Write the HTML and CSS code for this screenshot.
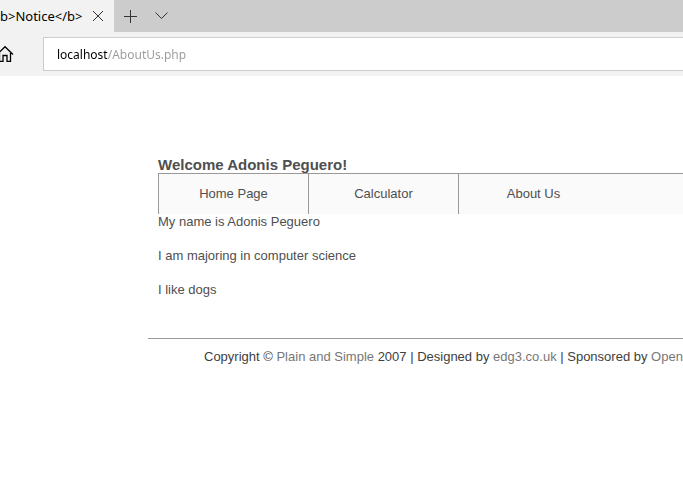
FILE: index.html
```html
<!DOCTYPE html>
<html lang="en">
<head>
<meta charset="utf-8">
<title>&lt;b&gt;Notice&lt;/b&gt;</title>
<link rel="stylesheet" href="styles.css">
</head>
<body>
<header class="browser">
  <div class="tabs">
    <div class="tab">
      <span class="tab-title">b&gt;Notice&lt;/b&gt;</span>
      <button class="icon-button" type="button" aria-label="Close tab">
        <svg width="12" height="12" viewBox="0 0 12 12"><path d="M1 1l10 10M11 1L1 11"/></svg>
      </button>
    </div>
    <button class="icon-button" type="button" aria-label="New tab">
      <svg width="13" height="13" viewBox="0 0 13 13"><path d="M6.500 0v13M0 6.500h13"/></svg>
    </button>
    <button class="icon-button" type="button" aria-label="Tab previews">
      <svg width="14" height="8" viewBox="0 0 14 8"><path d="M.500 .500l6 6 6-6"/></svg>
    </button>
  </div>
  <div class="toolbar">
    <button class="home" type="button" aria-label="Home">
      <svg width="18" height="18" viewBox="0 0 18 18"><path d="M1 9.500L9 1.700l8 7.800M3.500 8v8.300H7V10.500h4v5.800h3.500V8"/></svg>
    </button>
    <div class="address">
      <input class="address-input" type="text" aria-label="Address" value="localhost/AboutUs.php" spellcheck="false">
    </div>
  </div>
</header>
<main class="page">
  <div class="content">
    <h1 class="welcome">Welcome Adonis Peguero!</h1>
    <nav class="menu">
      <a class="menu-item" href="#home">Home Page</a>
      <a class="menu-item" href="#calculator">Calculator</a>
      <a class="menu-item" href="#about">About Us</a>
    </nav>
    <p>My name is Adonis Peguero</p>
    <p>I am majoring in computer science</p>
    <p>I like dogs</p>
  </div>
  <footer class="footer">Copyright © <a href="#plain">Plain and Simple</a> 2007 | Designed by <a href="#edg3">edg3.co.uk</a> | Sponsored by <a href="#open">Open</a></footer>
</main>
</body>
</html>
```
FILE: styles.css
```css
* {
  box-sizing: border-box;
}

body {
  margin: 0;
  background: #fff;
  color: #4f4f4f;
  font: 13px/20px "Liberation Sans", Arial, sans-serif;
  overflow-x: hidden;
}

button {
  padding: 0;
  border: 0;
  background: none;
}

svg {
  display: block;
  fill: none;
  stroke: #333;
}

.browser {
  background: #f2f2f2;
  color: #000;
  font-family: "Noto Sans", "Open Sans", sans-serif;
}

.tabs {
  display: flex;
  height: 32px;
  background: #ccc;
}

.tab {
  display: flex;
  align-items: center;
  width: 114px;
  background: #f2f2f2;
}

.tab-title {
  width: 82px;
  font-size: 13px;
  white-space: nowrap;
}

.icon-button {
  display: grid;
  place-items: center;
  width: 32px;
}

.toolbar {
  display: flex;
  align-items: center;
  height: 44px;
}

.home {
  flex: none;
  width: 43px;
  margin-left: -4px;
  margin-right: 4px;
}

.home svg {
  stroke: #000;
  stroke-width: 1.3;
}

.address {
  flex: 1;
  height: 34px;
  padding: 0 13px;
  border: 1px solid #ccc;
  border-right: 0;
  background: #fff;
}

.address-input {
  width: 100%;
  height: 32px;
  padding: 0;
  border: 0;
  outline: 0;
  background: linear-gradient(to right, #000 51px, #999 51px);
  background-clip: text;
  color: transparent;
  caret-color: #000;
  font: 12px "Noto Sans", "Open Sans", sans-serif;
}

.page {
  padding: 80px 0 0 148px;
}

.content {
  padding: 0 0 22px 10px;
}

.welcome {
  margin: 0;
  font-size: 15px;
  line-height: 17px;
}

.menu {
  display: flex;
  height: 41px;
  border-top: 1px solid #999;
  background: #fafafa;
}

.menu-item {
  width: 150px;
  border-left: 1px solid #999;
  color: #4f4f4f;
  line-height: 40px;
  text-align: center;
  text-decoration: none;
}

.content p {
  margin: 0 0 18px;
  line-height: 16px;
}

.footer {
  padding: 8px 0 8px 56px;
  border-top: 1px solid #999;
  color: #404040;
  white-space: nowrap;
}

.footer a {
  color: #777;
  text-decoration: none;
}
```
